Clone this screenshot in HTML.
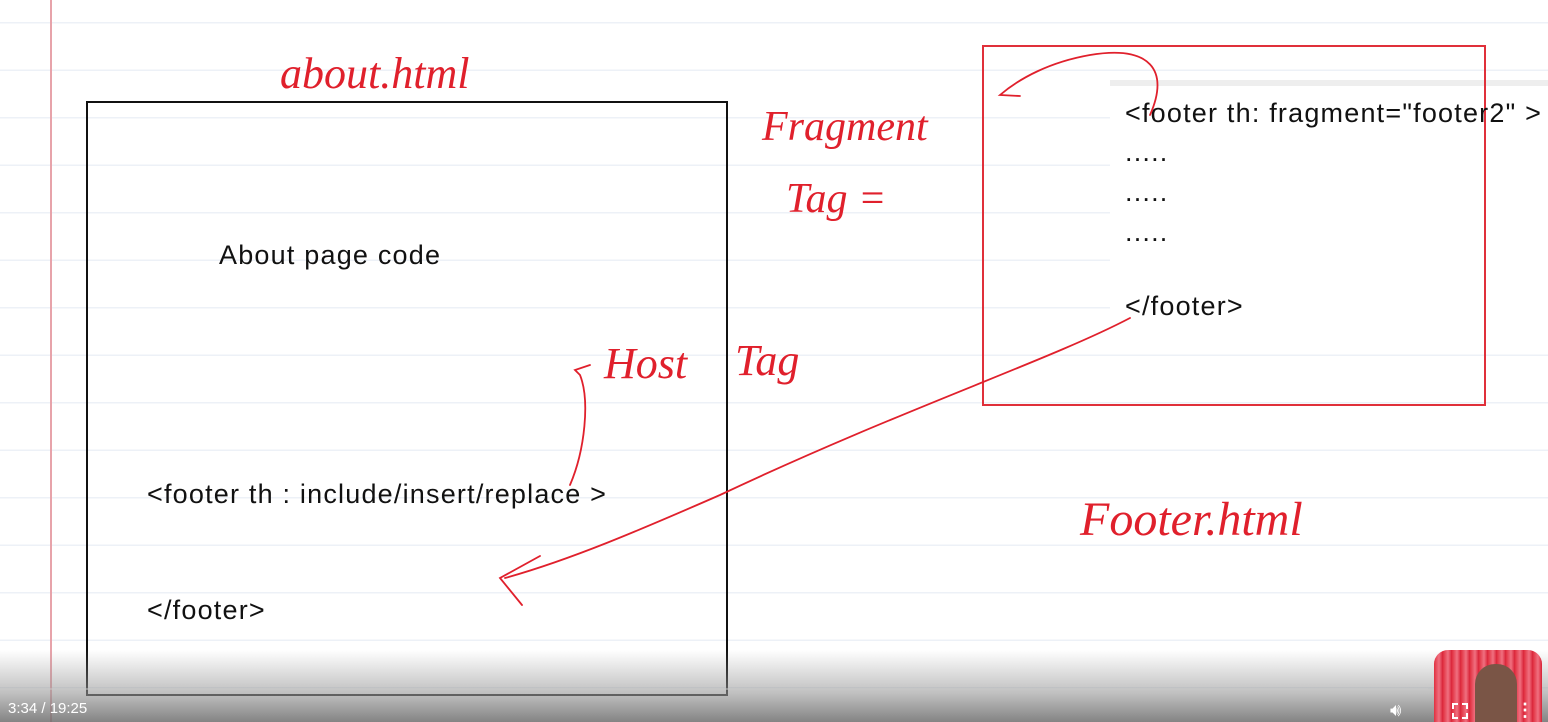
<!DOCTYPE html>
<html><head><meta charset="utf-8"><style>
html,body{margin:0;padding:0;width:1548px;height:722px;overflow:hidden;background:#fff;font-family:"Liberation Sans",sans-serif}
.lines{position:absolute;left:0;top:0;width:1548px;height:722px;background:repeating-linear-gradient(to bottom,transparent 0,transparent 22px,#edf1f7 22px,#edf1f7 23.5px,transparent 23.5px,transparent 47.5px)}
.t{position:absolute;font-size:27px;letter-spacing:1.2px;color:#111;white-space:nowrap}
.grad{position:absolute;left:0;top:650px;width:1548px;height:72px;background:linear-gradient(to bottom,rgba(255,255,255,0),rgba(150,150,150,.6) 60%,rgba(110,110,110,.85))}
</style></head><body>
<div class="lines"></div>
<div style="position:absolute;left:50px;top:0;width:2px;height:722px;background:#e7a3aa"></div>
<div style="position:absolute;left:86px;top:101px;width:638px;height:591px;border:2px solid #111"></div>
<div style="position:absolute;left:1110px;top:80px;width:438px;height:260px;background:#fff;border-top:6px solid #eee"></div>
<div style="position:absolute;left:982px;top:45px;width:500px;height:357px;border:2px solid #e0303a"></div>
<div class="t" style="left:219px;top:240px">About page code</div>
<div class="t" style="left:147px;top:479px">&lt;footer th : include/insert/replace &gt;</div>
<div class="t" style="left:147px;top:595px">&lt;/footer&gt;</div>
<div class="t" style="left:1125px;top:98px">&lt;footer th: fragment="footer2" &gt;</div>
<div class="t" style="left:1125px;top:137px">.....</div>
<div class="t" style="left:1125px;top:177px">.....</div>
<div class="t" style="left:1125px;top:217px">.....</div>
<div class="t" style="left:1125px;top:291px">&lt;/footer&gt;</div>
<svg width="1548" height="722" style="position:absolute;left:0;top:0" fill="none" stroke="#e0202c" stroke-width="1.8" stroke-linecap="round">
<text x="280" y="88" font-family="Liberation Serif" font-style="italic" font-size="44" fill="#e0202c" stroke="none">about.html</text>
<text x="762" y="140" font-family="Liberation Serif" font-style="italic" font-size="42" fill="#e0202c" stroke="none">Fragment</text>
<text x="786" y="212" font-family="Liberation Serif" font-style="italic" font-size="42" fill="#e0202c" stroke="none">Tag =</text>
<text x="604" y="378" font-family="Liberation Serif" font-style="italic" font-size="44" fill="#e0202c" stroke="none">Host</text>
<text x="735" y="375" font-family="Liberation Serif" font-style="italic" font-size="44" fill="#e0202c" stroke="none">Tag</text>
<text x="1080" y="535" font-family="Liberation Serif" font-style="italic" font-size="48" fill="#e0202c" stroke="none">Footer.html</text>
<path d="M1130 318 C1050 360 900 410 720 495 C640 530 570 560 505 578"/>
<path d="M540 556 L500 578 L522 605"/>
<path d="M1150 115 C1170 70 1150 45 1090 55 C1050 62 1020 78 1000 95 L1020 96"/>
<path d="M570 485 C585 450 590 400 580 375 L575 370 L590 365"/>
</svg>
<div class="grad"></div>
<div style="position:absolute;left:0;top:688px;width:1428px;height:2px;background:rgba(200,200,200,.5)"></div>
<div style="position:absolute;left:8px;top:700px;color:#fff;font-size:15px">3:34 / 19:25</div>
<div style="position:absolute;left:1434px;top:650px;width:108px;height:72px;border-radius:14px 14px 0 0;background:repeating-linear-gradient(90deg,#e03040 0,#f07080 5px,#d82035 9px)"></div>
<div style="position:absolute;left:1475px;top:664px;width:42px;height:58px;border-radius:20px 20px 0 0;background:#7a5546"></div>
<div style="position:absolute;left:1390px;top:700px;color:#fff;font-size:18px">🔊︎</div>
<div style="position:absolute;left:1452px;top:703px;width:12px;height:12px;border:2px dashed #fff"></div>
<div style="position:absolute;left:1516px;top:700px;color:#fff;font-size:18px;font-weight:bold">⋮</div>
</body></html>
